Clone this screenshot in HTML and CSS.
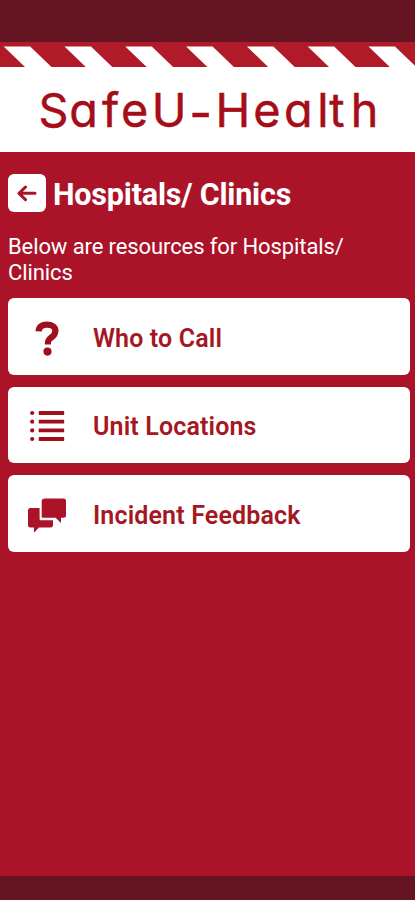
FILE: index.html
```html
<!DOCTYPE html>
<html lang="en">
<head>
    <meta charset="UTF-8">
    <meta name="viewport" content="width=device-width, initial-scale=1.0">
    <title>SafeU-Health</title>
    <link rel="stylesheet" href="styles.css">
</head>
<body>
    <div class="status-bar"></div>

    <header class="banner">
        <svg class="stripes" viewBox="0 0 415 25">
            <g fill="#fff">
                <path d="M-57.1 4.5h26.5l21.3 20.5h-26.5z"/>
                <path d="M3.7 4.5h26.5l21.3 20.5h-26.5z"/>
                <path d="M64.5 4.5h26.5l21.3 20.5h-26.5z"/>
                <path d="M125.3 4.5h26.5l21.3 20.5h-26.5z"/>
                <path d="M186.1 4.5h26.5l21.3 20.5h-26.5z"/>
                <path d="M246.9 4.5h26.5l21.3 20.5h-26.5z"/>
                <path d="M307.7 4.5h26.5l21.3 20.5h-26.5z"/>
                <path d="M368.5 4.5h26.5l21.3 20.5h-26.5z"/>
            </g>
        </svg>
        <svg class="logo" viewBox="0 0 415 85">
            <text y="60" x="37.5 68.5 101.5 120.5 151.5">SafeU<tspan class="dash" x="189.2" y="63">-</tspan><tspan y="60" x="215.5 253.5 284.5 318 330 351.5">Health</tspan></text>
        </svg>
    </header>

    <main class="content">
        <div class="title-row">
            <a class="back" href="#" aria-label="Back">
                <svg width="20" height="18" viewBox="0 0 20 18">
                    <path d="M8.5 3L2 9.3L8.5 15.6M2.5 9.3H18" fill="none" stroke="#ab1428" stroke-width="3" stroke-linecap="round" stroke-linejoin="round"/>
                </svg>
            </a>
            <h1>Hospitals/ Clinics</h1>
        </div>
        <p class="intro">Below are resources for Hospitals/<br>Clinics</p>

        <nav class="menu">
            <a class="card" href="#">
                <span class="icon">
                    <svg width="40" height="40" viewBox="0 0 40 40">
                        <path d="M11.6 13.4C11.8 8.8 15 6.6 19.9 6.6C25.1 6.6 28.4 9 28.4 12.9C28.4 16 26.7 17.7 24.4 19.4C21.4 21.5 20.8 22.6 20.8 26.4" fill="none" stroke="#a00f1c" stroke-width="6.2"/>
                        <circle cx="20.5" cy="33.6" r="4.1" fill="#a00f1c"/>
                    </svg>
                </span>
                <span class="label">Who to Call</span>
            </a>
            <a class="card" href="#">
                <span class="icon">
                    <svg width="40" height="40" viewBox="0 0 40 40">
                        <g fill="#a00f1c">
                            <circle cx="5.2" cy="7" r="2.1"/>
                            <circle cx="5.2" cy="15.7" r="2.1"/>
                            <circle cx="5.2" cy="24.4" r="2.1"/>
                            <circle cx="5.2" cy="33" r="2.1"/>
                            <rect x="11.7" y="5.1" width="25.5" height="3.8" rx=".6"/>
                            <rect x="11.7" y="13.8" width="25.5" height="3.8" rx=".6"/>
                            <rect x="11.7" y="22.5" width="25.5" height="3.8" rx=".6"/>
                            <rect x="11.7" y="31.1" width="25.5" height="3.8" rx=".6"/>
                        </g>
                    </svg>
                </span>
                <span class="label">Unit Locations</span>
            </a>
            <a class="card" href="#">
                <span class="icon">
                    <svg width="40" height="40" viewBox="0 0 40 40">
                        <g fill="#ab1428">
                            <path d="M18 3.5H36.5Q39 3.5 39 6V20.3Q39 22.8 36.5 22.8H34V28L28.6 22.8H15.5Q14.7 22.8 14.7 22V6Q14.7 3.5 18 3.5Z"/>
                            <path d="M3.5 13H12.6V24Q12.6 25.2 13.8 25.2H26V30Q26 32.5 23.5 32.5H12L7 37.8V32.5H3.5Q1 32.5 1 30V15.5Q1 13 3.5 13Z"/>
                        </g>
                    </svg>
                </span>
                <span class="label">Incident Feedback</span>
            </a>
        </nav>
    </main>

    <div class="nav-bar"></div>
</body>
</html>
```

FILE: styles.css
```css
*{
    margin: 0;
    padding: 0;
    box-sizing: border-box;
}
body{
    display: flex;
    flex-direction: column;
    height: 900px;
    background-color: #ab1428;
    color: white;
    font-family: Roboto, "Liberation Sans", sans-serif;
}
a{
    text-decoration: none;
}
svg{
    display: block;
}
.status-bar{
    height: 42px;
    background-color: #641521;
}
.banner{
    height: 109.5px;
    background-color: white;
}
.stripes{
    width: 415px;
    height: 25px;
    background-color: #b01a29;
}
.logo{
    width: 415px;
    height: 84.5px;
}
.logo text{
    font-family: Inter, sans-serif;
    font-size: 47px;
    font-feature-settings: "cv11";
    fill: #a50d18;
    stroke: #a50d18;
    stroke-width: 0.5px;
}
.logo .dash{
    font-size: 50px;
}
.content{
    flex: 1;
    padding: 22.5px 5px 0 8px;
}
.title-row{
    display: flex;
    align-items: flex-start;
    gap: 7px;
}
.back{
    display: flex;
    align-items: center;
    justify-content: center;
    width: 38px;
    height: 38px;
    border-radius: 6px;
    background-color: white;
}
h1{
    padding-top: 2px;
    font-size: 30.5px;
    line-height: 38px;
    letter-spacing: -0.2px;
}
.intro{
    margin-top: 19.5px;
    font-size: 22px;
    line-height: 26px;
    letter-spacing: -0.1px;
}
.menu{
    display: flex;
    flex-direction: column;
    gap: 12px;
    margin-top: 12.5px;
}
.card{
    display: flex;
    align-items: center;
    height: 76.6px;
    padding-left: 19px;
    border-radius: 6px;
    background-color: white;
}
.icon{
    width: 66px;
    padding-top: 3px;
}
.label{
    padding-top: 4px;
    color: #a51722;
    font-size: 25px;
    font-weight: 600;
    letter-spacing: 0.15px;
}
.nav-bar{
    height: 24px;
    background-color: #641521;
}
```
